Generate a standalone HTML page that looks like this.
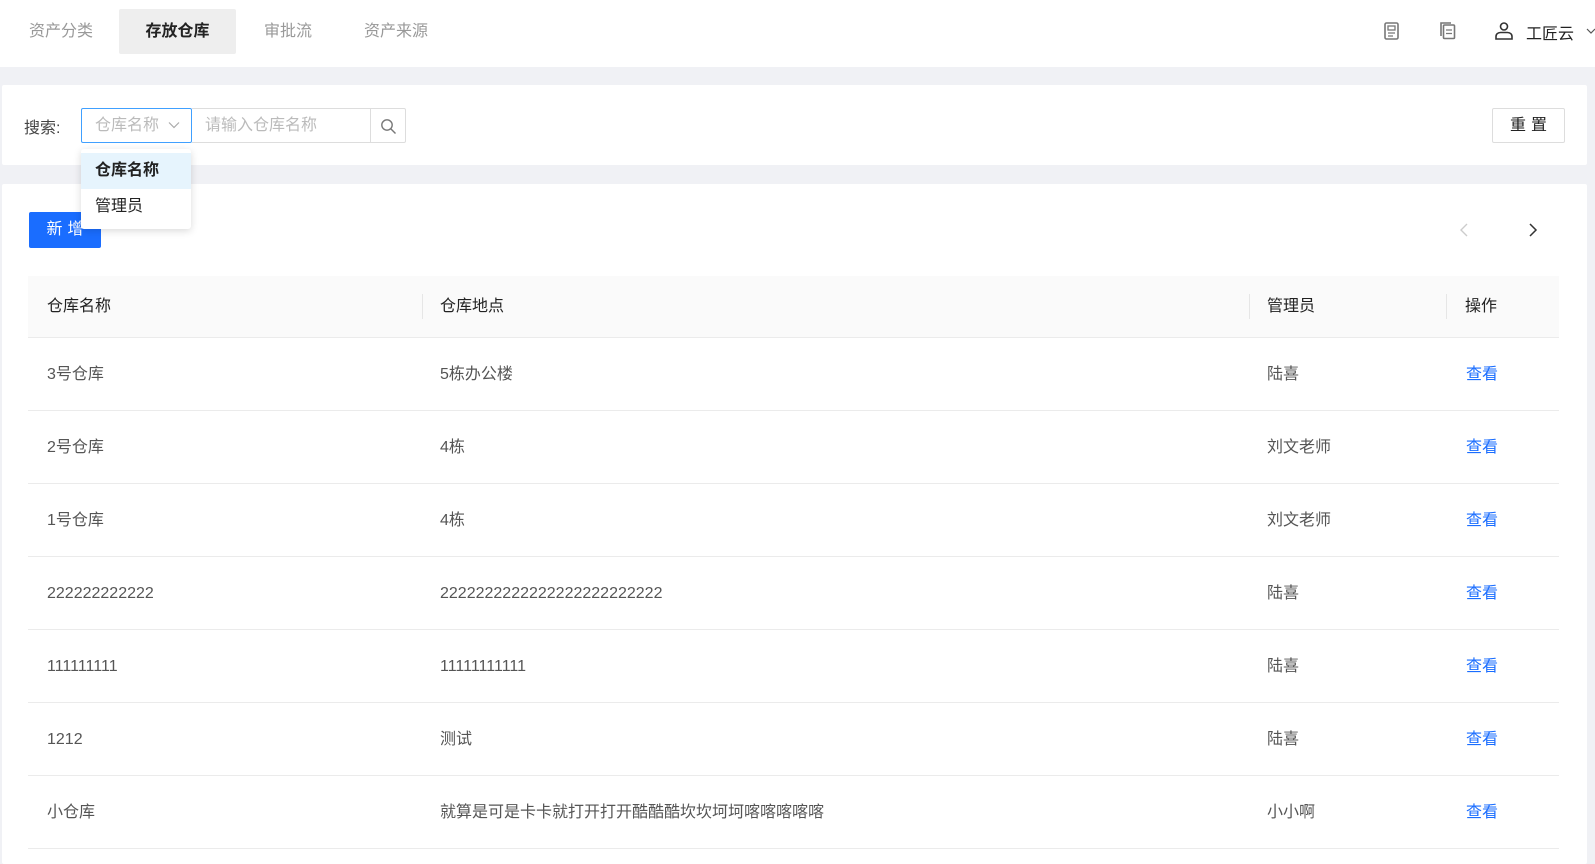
<!DOCTYPE html>
<html><head><meta charset="utf-8"><style>
*{margin:0;padding:0;box-sizing:border-box}
body{width:1595px;height:858px;overflow:hidden;background:#f0f1f5;font-family:"Liberation Sans","Noto Sans CJK SC",sans-serif;font-size:16px;color:#333;position:relative}
.top{position:absolute;left:0;top:0;width:1595px;height:67px;background:#fff}
.tab{position:absolute;top:9px;height:45px;line-height:45px;font-size:16px;color:#999}
.abs{position:absolute}
.p1{position:absolute;left:2px;top:85px;width:1585px;height:80px;background:#fff;border-radius:2px}
.p2{position:absolute;left:2px;top:184px;width:1585px;height:680px;background:#fff;border-radius:2px}
.row{position:absolute;left:28px;width:1531px;height:73px;border-bottom:1px solid #ebebeb}
.row span{position:absolute;top:0;line-height:73px;color:#555}
.row a{position:absolute;left:1438px;line-height:73px;color:#1a6dff;text-decoration:none}
</style></head><body>
<div class="top">
  <div class="tab" style="left:29px">资产分类</div>
  <div class="tab" style="left:119px;width:117px;background:#eeeeee;border-radius:2px;color:#222;font-weight:bold;text-align:center">存放仓库</div>
  <div class="tab" style="left:264px">审批流</div>
  <div class="tab" style="left:364px">资产来源</div>
  <svg class="abs" style="left:1384px;top:22px" width="16" height="18" viewBox="0 0 16 18"><rect x="1" y="1" width="13" height="16" rx="1.5" fill="none" stroke="#777" stroke-width="1.6"/><rect x="4" y="4" width="7" height="4" fill="none" stroke="#777" stroke-width="1.3"/><path d="M4 11h7M4 14h5" stroke="#777" stroke-width="1.3"/></svg>
  <svg class="abs" style="left:1439px;top:21px" width="18" height="19" viewBox="0 0 18 19"><path d="M2 15V2h10" fill="none" stroke="#777" stroke-width="1.6"/><rect x="4.5" y="4" width="11" height="13.5" rx="1" fill="none" stroke="#777" stroke-width="1.6"/><path d="M7 9h6M7 12.5h6" stroke="#777" stroke-width="1.3"/></svg>
  <svg class="abs" style="left:1494px;top:21px" width="20" height="19" viewBox="0 0 20 19"><circle cx="10" cy="5.5" r="3.5" fill="none" stroke="#333" stroke-width="1.6"/><path d="M2 18v-2.5c0-2.5 2-4 4.5-4h7c2.5 0 4.5 1.5 4.5 4V18z" fill="none" stroke="#333" stroke-width="1.6"/></svg>
  <div class="abs" style="left:1526px;top:20px;font-size:16px;color:#222">工匠云</div>
  <svg class="abs" style="left:1586px;top:27px" width="10" height="8" viewBox="0 0 10 8"><path d="M1 2l4 4 4-4" fill="none" stroke="#555" stroke-width="1.2"/></svg>
</div>
<div class="p1">
  <div class="abs" style="left:22px;top:29px;color:#444;font-size:16px">搜索:</div>
  <div class="abs" style="left:79px;top:23px;width:111px;height:35px;border:1px solid #40a0ff;border-radius:2px;color:#bbb;line-height:33px;padding-left:13px">仓库名称<svg style="position:absolute;left:86px;top:12px" width="12" height="8" viewBox="0 0 12 8"><path d="M1 1.5l5 5 5-5" fill="none" stroke="#aaa" stroke-width="1.2"/></svg></div>
  <div class="abs" style="left:190px;top:23px;width:179px;height:35px;border:1px solid #ddd;border-left:none;color:#bbb;line-height:33px;padding-left:13px">请输入仓库名称</div>
  <div class="abs" style="left:368px;top:23px;width:36px;height:35px;border:1px solid #ddd;border-radius:0 2px 2px 0"><svg style="position:absolute;left:9px;top:9px" width="17" height="17" viewBox="0 0 17 17"><circle cx="7" cy="7" r="5.2" fill="none" stroke="#777" stroke-width="1.4"/><path d="M11 11l4.5 4.5" stroke="#777" stroke-width="1.4"/></svg></div>
  <div class="abs" style="left:1490px;top:23px;width:73px;height:35px;border:1px solid #ddd;border-radius:2px;text-align:center;line-height:33px;color:#222;letter-spacing:5px;padding-left:5px">重置</div>
</div>
<div class="p2">
  <div class="abs" style="left:27px;top:28px;width:72px;height:36px;background:#1a6dff;border-radius:2px;color:#fff;text-align:center;line-height:36px;letter-spacing:5px;padding-left:5px">新增</div>
  <svg class="abs" style="left:1457px;top:39px" width="10" height="14" viewBox="0 0 10 14"><path d="M8 1L2 7l6 6" fill="none" stroke="#ccc" stroke-width="1.4"/></svg>
  <svg class="abs" style="left:1526px;top:39px" width="10" height="14" viewBox="0 0 10 14"><path d="M2 1l6 6-6 6" fill="none" stroke="#333" stroke-width="1.5"/></svg>
</div>
<div class="abs" style="left:28px;top:276px;width:1531px;height:62px;background:#fafafa;border-bottom:1px solid #ebebeb">
  <span class="abs" style="left:19px;line-height:61px;color:#222">仓库名称</span>
  <span class="abs" style="left:394px;top:18px;width:1px;height:25px;background:#e6e6e6"></span>
  <span class="abs" style="left:412px;line-height:61px;color:#222">仓库地点</span>
  <span class="abs" style="left:1221px;top:18px;width:1px;height:25px;background:#e6e6e6"></span>
  <span class="abs" style="left:1239px;line-height:61px;color:#222">管理员</span>
  <span class="abs" style="left:1418px;top:18px;width:1px;height:25px;background:#e6e6e6"></span>
  <span class="abs" style="left:1437px;line-height:61px;color:#222">操作</span>
</div>
<div class="row" style="top:338px"><span style="left:19px">3号仓库</span><span style="left:412px">5栋办公楼</span><span style="left:1239px">陆喜</span><a>查看</a></div>
<div class="row" style="top:411px"><span style="left:19px">2号仓库</span><span style="left:412px">4栋</span><span style="left:1239px">刘文老师</span><a>查看</a></div>
<div class="row" style="top:484px"><span style="left:19px">1号仓库</span><span style="left:412px">4栋</span><span style="left:1239px">刘文老师</span><a>查看</a></div>
<div class="row" style="top:557px"><span style="left:19px">222222222222</span><span style="left:412px">2222222222222222222222222</span><span style="left:1239px">陆喜</span><a>查看</a></div>
<div class="row" style="top:630px"><span style="left:19px">111111111</span><span style="left:412px">11111111111</span><span style="left:1239px">陆喜</span><a>查看</a></div>
<div class="row" style="top:703px"><span style="left:19px">1212</span><span style="left:412px">测试</span><span style="left:1239px">陆喜</span><a>查看</a></div>
<div class="row" style="top:776px"><span style="left:19px">小仓库</span><span style="left:412px">就算是可是卡卡就打开打开酷酷酷坎坎坷坷喀喀喀喀喀</span><span style="left:1239px">小小啊</span><a>查看</a></div>
<div class="abs" style="left:81px;top:149px;width:110px;height:80px;background:#fff;border-radius:3px;box-shadow:0 2px 8px rgba(0,0,0,.15)">
  <div style="margin-top:4px;height:36px;line-height:36px;background:#e6f4fd;padding-left:14px;font-weight:bold;color:#222">仓库名称</div>
  <div style="height:36px;line-height:36px;padding-left:14px;color:#222">管理员</div>
</div>
</body></html>
